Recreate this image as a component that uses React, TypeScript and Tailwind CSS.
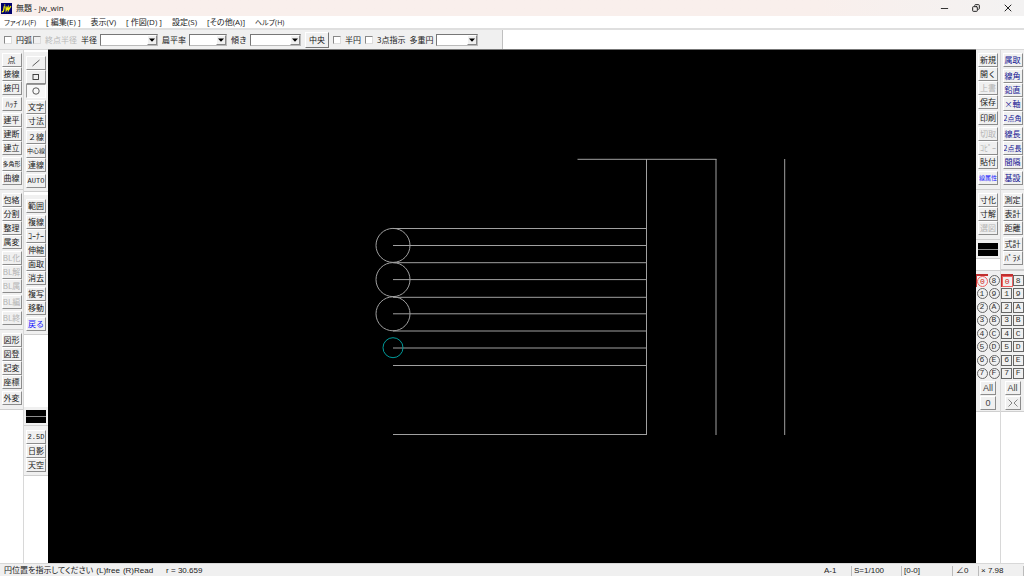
import * as React from "react"
import clsx from "clsx"
import { Minus, X, Copy } from "lucide-react"

type Tone = "normal" | "off" | "blue" | "navy"
type Tool = { label: React.ReactNode; name?: string; tone?: Tone; size?: "sm" | "xs" | "mono"; pressed?: boolean }

const t = (labels: string, tone: Tone = "normal", size?: Tool["size"]): Tool[] =>
    labels.split(" ").map((label) => ({ label, tone, size }))

const slash = (
    <svg viewBox="0 0 8 8" className="size-2"><path d="M0.5 7 L7.5 1" stroke="#333" strokeWidth="0.8" /></svg>
)
const square = (
    <svg viewBox="0 0 8 8" className="size-2"><rect x="1" y="1.5" width="5.5" height="5" fill="none" stroke="#333" strokeWidth="0.9" /></svg>
)
const circle = (
    <svg viewBox="0 0 8 8" className="size-2"><circle cx="4" cy="4" r="3.2" fill="none" stroke="#333" strokeWidth="0.8" /></svg>
)

const left1 = [
    [t("点 接線 接円"), t("ﾊｯﾁ"), t("建平 建断 建立"), [{ label: "多角形", size: "xs" }, { label: "曲線" }]],
    [t("包絡 分割 整理 属変"), t("BL化 BL解 BL属", "off"), t("BL編", "off"), t("BL終", "off")],
    [t("図形 図登 記変 座標"), t("外変")],
] as Tool[][][]

const left2 = [
    [
        [
            { label: slash, name: "線" },
            { label: square, name: "矩形" },
            { label: circle, name: "円弧", pressed: true },
        ],
        t("文字 寸法"),
        [{ label: "２線" }, { label: "中心線", size: "xs" }, { label: "連線" }],
        t("AUTO", "normal", "mono"),
    ],
    [t("範囲"), t("複線 ｺｰﾅｰ 伸縮 面取 消去"), t("複写 移動"), t("戻る", "blue")],
] as Tool[][][]

const left2Bottom: Tool[][] = [[...t("2.5D", "normal", "mono"), ...t("日影 天空")]]

const right1 = [
    [
        [...t("新規 開く"), ...t("上書", "off"), ...t("保存")],
        t("印刷"),
        [...t("切取 ｺﾋﾟｰ", "off"), ...t("貼付")],
        [{ label: "線属性", tone: "blue", size: "xs" }],
    ],
    [[...t("寸化 寸解"), ...t("選図", "off")]],
] as Tool[][][]

const right2 = [
    [
        t("属取", "navy"),
        [...t("線角 鉛直 ×軸", "navy"), ...t("2点角", "navy", "sm")],
        [...t("線長", "navy"), ...t("2点長", "navy", "sm"), ...t("間隔", "navy")],
        t("基設", "navy"),
    ],
    [t("測定 表計 距離"), t("式計 ﾊﾟﾗﾒ")],
] as Tool[][][]

const menus = [
    { label: "ファイル(F)", kana: true },
    { label: "[ 編集(E) ]" },
    { label: "表示(V)" },
    { label: "[ 作図(D) ]" },
    { label: "設定(S)" },
    { label: "[その他(A)]" },
    { label: "ヘルプ(H)", kana: true },
]

const layers = ["0", "8", "1", "9", "2", "A", "3", "B", "4", "C", "5", "D", "6", "E", "7", "F"]

const rowLines = [228.5, 245.5, 262.7, 279.6, 297.3, 313.8, 331, 348, 365.5, 434.5]
const arcs = [245.4, 279.6, 313.8]

function ToolButton({ label, name, tone = "normal", size, pressed }: Tool) {
    return (
        <button
            type="button"
            aria-label={name}
            aria-pressed={pressed}
            className={clsx(
                "flex h-[14px] w-5 items-center justify-center overflow-hidden border leading-none whitespace-nowrap",
                pressed
                    ? "border-t-[#999] border-l-[#999] border-r-white border-b-white bg-[#f8f8f8]"
                    : "border-t-white border-l-white border-r-[#8c8c8c] border-b-[#8c8c8c] bg-[#f0f0f0]",
                !size && "text-[8px]",
                size === "sm" && "text-[7px]",
                size === "xs" && "text-[6px]",
                size === "mono" && "font-['Liberation_Mono',monospace] text-[7px]",
                tone === "normal" && "text-[#1a1a1a]",
                tone === "off" && "text-[#b4b4b4]",
                tone === "blue" && "text-[#1515ff]",
                tone === "navy" && "text-[#101090]",
            )}
        >
            {label}
        </button>
    )
}

function Palette({ groups, className }: { groups: Tool[][]; className: string }) {
    return (
        <div className={clsx("flex flex-col items-center gap-[2px] border-b border-[#cfcfcf] bg-[#f0f0f0]", className)}>
            {groups.map((group, i) => (
                <div key={i}>
                    {group.map((tool, j) => (
                        <ToolButton key={j} {...tool} />
                    ))}
                </div>
            ))}
        </div>
    )
}

function LineSample() {
    return (
        <div className="border-b border-[#cfcfcf] bg-[#f0f0f0] px-[2px] pt-[3px] pb-[2px]">
            <button type="button" aria-label="線種" className="flex h-[13px] w-full flex-col justify-center bg-black">
                <span className="h-px w-full bg-[#909090]" />
            </button>
        </div>
    )
}

function LayerPalette({ round, foot }: { round?: boolean; foot: React.ReactNode }) {
    return (
        <div className="flex flex-col items-center gap-px border-y border-[#cfcfcf] bg-[#f0f0f0] pt-[3px] pb-px">
            <div className="grid h-[106px] w-full grid-cols-2 grid-rows-8">
                {layers.map((n, i) => (
                    <button
                        key={n}
                        type="button"
                        className={clsx(
                            "flex items-center justify-center",
                            i === 0 ? "border-t-2 border-l border-[#c03030] text-[#d02020]" : "text-[#333]",
                        )}
                    >
                        <span
                            className={clsx(
                                "flex size-[11px] shrink-0 items-center justify-center border font-['Liberation_Mono',monospace] text-[8px] leading-none",
                                round && "rounded-full",
                                i === 0 ? "border-[#f06060]" : "border-[#666]",
                            )}
                        >
                            {n}
                        </span>
                    </button>
                ))}
            </div>
            {["All", foot].map((label, i) => (
                <button
                    key={i}
                    type="button"
                    aria-label={i === 1 && !round ? "反転" : undefined}
                    className="flex h-[14px] w-4 items-center justify-center border border-t-white border-l-white border-r-[#8c8c8c] border-b-[#8c8c8c] font-['Liberation_Sans',sans-serif] text-[9px] leading-none text-[#444]"
                >
                    {label}
                </button>
            ))}
        </div>
    )
}

function Check({ label, disabled, className }: { label: string; disabled?: boolean; className?: string }) {
    return (
        <label className={clsx("flex items-center gap-1", disabled && "text-[#b8b8b8]", className)}>
            <input
                type="checkbox"
                disabled={disabled}
                className={clsx(
                    "size-2 appearance-none border border-t-[#888] border-l-[#888] border-r-[#ddd] border-b-[#ddd]",
                    disabled ? "bg-[#f0f0f0]" : "bg-white",
                )}
            />
            {label}
        </label>
    )
}

function Combo({ label, width, className }: { label: string; width: string; className?: string }) {
    return (
        <label className={clsx("flex items-center gap-[3px]", className)}>
            {label}
            <span className={clsx("relative flex h-3", width)}>
                <select className="h-3 w-full appearance-none border border-t-[#777] border-l-[#777] border-r-[#bbb] border-b-[#bbb] bg-white">
                    <option></option>
                </select>
                <span className="pointer-events-none absolute top-px right-px flex h-[10px] w-[10px] items-center justify-center border border-t-white border-l-white border-r-[#888] border-b-[#888] bg-[#f0f0f0]">
                    <svg viewBox="0 0 6 4" className="h-1 w-[6px]"><path d="M0 0.5h6L3 3.8z" fill="#000" /></svg>
                </span>
            </span>
        </label>
    )
}

function Drawing() {
    return (
        <svg viewBox="48 50 928 513" preserveAspectRatio="xMidYMid meet" className="h-full w-full" fill="none" stroke="#a0a0a0">
            {rowLines.map((y) => (
                <line key={y} x1="393" y1={y} x2="647" y2={y} />
            ))}
            <line x1="577.5" y1="159.3" x2="716.5" y2="159.3" />
            <line x1="646.5" y1="159" x2="646.5" y2="435" />
            <line x1="716" y1="159" x2="716" y2="435" />
            <line x1="784.7" y1="159" x2="784.7" y2="435" />
            {arcs.map((y) => (
                <circle key={y} cx="393" cy={y} r="17" />
            ))}
            <circle cx="393" cy="347.7" r="10" stroke="#009a9a" />
        </svg>
    )
}

export default function App() {
    return (
        <div className="flex h-screen flex-col overflow-hidden bg-white font-['Noto_Sans_CJK_JP',sans-serif] text-[8px] leading-none text-[#1a1a1a]">
            {/* Title bar */}
            <header className="flex h-4 shrink-0 items-center bg-linear-to-r from-[#f9efec] from-80% to-[#f3f2f2] pl-px">
                <svg viewBox="0 0 11 11" className="size-[11px]">
                    <rect width="11" height="11" fill="#00006e" />
                    <path d="M3.4 3.2 L2.5 7.8 Q2.2 9 0.8 8.7 M3.7 1.6v0.9 M5 3.4 L5.2 7.4 L7.1 4 L7.3 7.4 L9.8 3.2" fill="none" stroke="#f4f000" strokeWidth="1.3" />
                </svg>
                <h1 className="ml-1 grow font-['Open_Sans','Noto_Sans_CJK_JP',sans-serif]">無題 - jw_win</h1>
                <div className="flex items-center text-[#222]">
                    <button type="button" aria-label="最小化" className="flex w-[31px] justify-center"><Minus size={11} strokeWidth={2} /></button>
                    <button type="button" aria-label="元に戻す" className="flex w-[31px] justify-center"><Copy size={8} strokeWidth={3} className="-scale-x-100" /></button>
                    <button type="button" aria-label="閉じる" className="flex w-[33px] justify-center"><X size={12} strokeWidth={2} /></button>
                </div>
            </header>

            {/* Menu */}
            <nav className="flex h-[14px] shrink-0 items-center gap-[10px] border-b-2 border-[#dfdfdf] pl-1 font-['Open_Sans','Noto_Sans_CJK_JP',sans-serif] [font-feature-settings:'palt']">
                {menus.map((m) => (
                    <button key={m.label} type="button" className={clsx("whitespace-nowrap", m.kana ? "text-[7px]" : "text-[8px]")}>{m.label}</button>
                ))}
            </nav>

            {/* Option bar */}
            <div className="flex h-[19px] shrink-0">
                <div className="flex items-center border-r border-[#c0c0c0] bg-[#f0f0f0] pr-6 pl-1 whitespace-nowrap">
                    <Check label="円弧" />
                    <Check label="終点半径" disabled className="ml-px" />
                    <Combo label="半径" width="w-[58px]" className="ml-1" />
                    <Combo label="扁平率" width="w-[38px]" className="ml-1" />
                    <Combo label="傾き" width="w-[51px]" className="ml-1" />
                    <button type="button" className="ml-1 h-4 w-6 border border-t-white border-l-white border-r-[#777] border-b-[#777]">中央</button>
                    <Check label="半円" className="ml-1" />
                    <Check label="3点指示" className="ml-1" />
                    <Combo label="多重円" width="w-[42px]" className="ml-1" />
                </div>
            </div>

            <div className="flex min-h-0 grow">
                <aside className="flex shrink-0 bg-white">
                    <div className="w-6 border-t border-r border-[#d8d8d8]">
                        {left1.map((groups, i) => (
                            <Palette key={i} groups={groups} className="pt-[3px] pb-1" />
                        ))}
                    </div>
                    <div className="flex w-6 flex-col gap-[3px] border-t border-[#d8d8d8] pt-[2px]">
                        {left2.map((groups, i) => (
                            <Palette key={i} groups={groups} className="pt-1 pb-[3px]" />
                        ))}
                        <div className="mt-[69px]">
                            <LineSample />
                            <Palette groups={left2Bottom} className="pt-1 pb-[3px]" />
                        </div>
                    </div>
                </aside>

                <main className="min-w-0 grow border-t border-[#777] bg-black">
                    <Drawing />
                </main>

                <aside className="flex shrink-0 bg-white">
                    <div className="w-6 border-t border-[#d8d8d8]">
                        {right1.map((groups, i) => (
                            <Palette key={i} groups={groups} className="pt-[3px] pb-1" />
                        ))}
                        <LineSample />
                        <div className="mt-[11px]">
                            <LayerPalette round foot="0" />
                        </div>
                    </div>
                    <div className="w-6 border-t border-l border-[#d8d8d8]">
                        {right2.map((groups, i) => (
                            <Palette key={i} groups={groups} className="pt-[3px] pb-1" />
                        ))}
                        <LayerPalette
                            foot={
                                <svg viewBox="0 0 10 8" className="h-2 w-[10px]">
                                    <path d="M0.5 0.5L4 4L0.5 7.5M9.5 0.5L6 4L9.5 7.5" fill="none" stroke="#777" strokeWidth="0.9" />
                                </svg>
                            }
                        />
                    </div>
                </aside>
            </div>

            {/* Status bar */}
            <footer className="flex h-[13px] shrink-0 items-center border-t border-[#d8d8d8] bg-[#f0f0f0] pt-px pl-1 font-['Liberation_Sans','Noto_Sans_CJK_JP',sans-serif] whitespace-nowrap">
                <p className="flex grow items-center gap-[3px] [font-feature-settings:'palt']">
                    <span>円位置を指示してください</span>
                    <span>(L)free</span>
                    <span>(R)Read</span>
                    <span className="ml-[10px]">r = 30.659</span>
                </p>
                <span className="w-7 border-r border-[#bbb] py-px">A-1</span>
                <span className="w-[50px] border-r border-[#bbb] py-px pl-[2px]">S=1/100</span>
                <span className="w-[51px] border-r border-[#bbb] py-px pl-[2px]">[0-0]</span>
                <span className="w-[26px] border-r border-[#bbb] py-px pl-[3px]">∠0</span>
                <span className="w-[45px] border-r border-[#bbb] py-px pl-[2px]">× 7.98</span>
            </footer>
        </div>
    )
}
